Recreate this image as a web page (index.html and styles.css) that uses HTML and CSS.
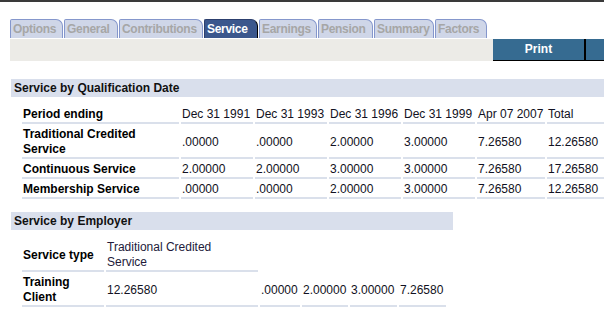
FILE: index.html
```html
<!DOCTYPE html>
<html lang="en">
<head>
  <meta charset="UTF-8" />
  <title>Service</title>
  <link rel="stylesheet" href="styles.css">
</head>
<body>
  <div class="tabs">
    <div class="tab">Options</div>
    <div class="tab">General</div>
    <div class="tab">Contributions</div>
    <div class="tab active">Service</div>
    <div class="tab">Earnings</div>
    <div class="tab">Pension</div>
    <div class="tab">Summary</div>
    <div class="tab">Factors</div>
  </div>

  <div class="toolbar">
    <div class="toolbar-fill"></div>
    <button class="print-btn">Print</button>
    <div class="toolbar-more"></div>
  </div>

  <div class="section section-wide">
    <div class="section-title">Service by Qualification Date</div>
    <table class="grid grid-dates">
      <colgroup>
        <col class="c-label"><col class="c-date"><col class="c-date"><col class="c-date"><col class="c-date"><col class="c-last"><col class="c-total">
      </colgroup>
      <tr>
        <th>Period ending</th>
        <td>Dec 31 1991</td><td>Dec 31 1993</td><td>Dec 31 1996</td><td>Dec 31 1999</td><td>Apr 07 2007</td><td>Total</td>
      </tr>
      <tr>
        <th>Traditional Credited Service</th>
        <td>.00000</td><td>.00000</td><td>2.00000</td><td>3.00000</td><td>7.26580</td><td>12.26580</td>
      </tr>
      <tr>
        <th>Continuous Service</th>
        <td>2.00000</td><td>2.00000</td><td>3.00000</td><td>3.00000</td><td>7.26580</td><td>17.26580</td>
      </tr>
      <tr>
        <th>Membership Service</th>
        <td>.00000</td><td>.00000</td><td>2.00000</td><td>3.00000</td><td>7.26580</td><td>12.26580</td>
      </tr>
    </table>
  </div>

  <div class="section section-narrow">
    <div class="section-title">Service by Employer</div>
    <table class="grid grid-employer">
      <colgroup>
        <col class="c-emp-label"><col class="c-emp-type"><col class="c-v1"><col class="c-v2"><col class="c-v3"><col class="c-v4">
      </colgroup>
      <tr>
        <th>Service type</th>
        <td class="type-head">Traditional Credited Service</td>
      </tr>
      <tr>
        <th>Training Client</th>
        <td>12.26580</td><td>.00000</td><td>2.00000</td><td>3.00000</td><td>7.26580</td>
      </tr>
    </table>
  </div>
</body>
</html>
```

FILE: styles.css
```css
html, body {
  margin: 0;
  padding: 0;
  overflow: hidden;
  background: #ffffff;
}

body {
  border-top: 2px solid #3a3a3a;
  font-family: "Liberation Sans", Arial, sans-serif;
  font-size: 12px;
  color: #000;
}

.tabs {
  display: grid;
  grid-template-columns: 53px 54px 84px 54px 58px 55px 60px 52px;
  column-gap: 1px;
  margin: 17px 0 1px 10px;
  height: 19px;
}

.tab {
  box-sizing: border-box;
  height: 19px;
  padding-left: 2px;
  line-height: 19px;
  background: #cfd6e8;
  border: 1px solid #8597cc;
  border-bottom: none;
  border-top-left-radius: 2px;
  border-top-right-radius: 7px;
  color: #a6a6a6;
  font-size: 12px;
  font-weight: bold;
  letter-spacing: -0.3px;
  white-space: nowrap;
  overflow: hidden;
}

.tab.active {
  background: #3b578d;
  border-color: #2c3f6e;
  border-right-color: #000;
  color: #fff;
}

.toolbar {
  display: flex;
  width: 594px;
  height: 22px;
  margin-left: 10px;
  background: #ecebe7;
}

.toolbar-fill { flex: 1; }

.print-btn {
  width: 93px;
  height: 22px;
  padding: 0;
  background: #366b91;
  border: none;
  border-right: 2px solid #000;
  border-bottom: 1px solid #000;
  color: #fff;
  font-family: "Liberation Sans", Arial, sans-serif;
  font-size: 12px;
  font-weight: bold;
  line-height: 21px;
}

.toolbar-more {
  width: 18px;
  background: #366b91;
  border-bottom: 1px solid #000;
}

.section { margin-top: 18px; }
.section-narrow { margin-top: 11px; }

.section-title {
  margin-left: 11px;
  height: 18px;
  padding-left: 3px;
  line-height: 18px;
  background: #d9dfec;
  color: #111;
  font-weight: bold;
}

.section-narrow .section-title { width: 439px; }

.grid {
  margin: 7px 0 0 20px;
  border-collapse: separate;
  border-spacing: 2px;
  table-layout: fixed;
}

.grid th, .grid td {
  padding: 1px 0 0 1px;
  border-bottom: 2px solid #dae0eb;
  line-height: 15px;
  text-align: left;
  vertical-align: middle;
  font-size: 12px;
}

.grid th { font-weight: bold; color: #000; }
.grid td { font-weight: normal; color: #111122; white-space: nowrap; }

.grid-dates { width: 586px; }
.c-label { width: 157px; }
.c-date { width: 72px; }
.c-last { width: 68px; }
.c-total { width: 57px; }

.grid-employer { width: 428px; }
.c-emp-label { width: 82px; }
.c-emp-type { width: 152px; }
.c-v1 { width: 40px; }
.c-v2 { width: 46px; }
.c-v3 { width: 47px; }
.c-v4 { width: 47px; }

.grid td.type-head {
  padding-right: 30px;
  white-space: normal;
  color: #221a3a;
}
```
